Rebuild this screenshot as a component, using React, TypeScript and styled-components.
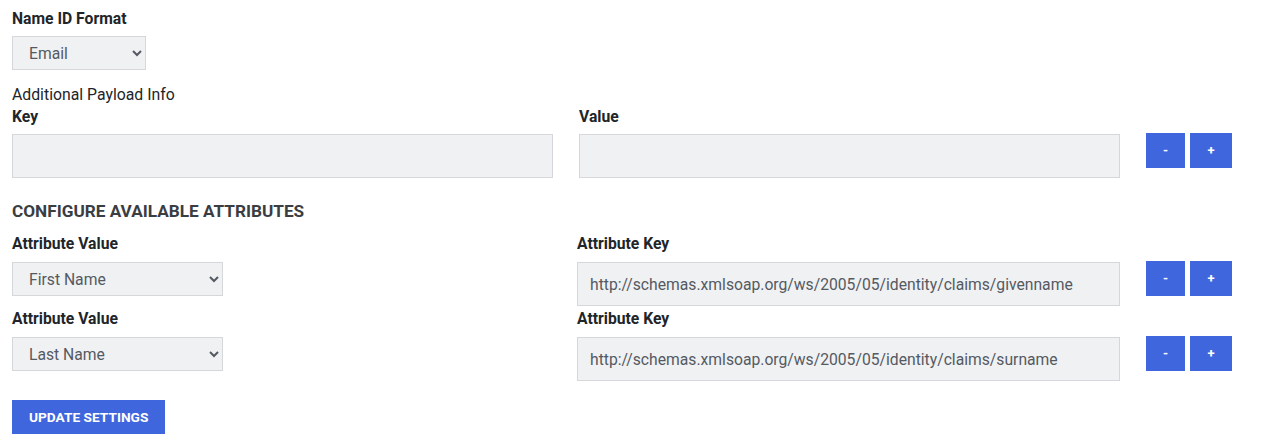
import React from "react";
import styled, { createGlobalStyle } from "styled-components";

const colors = {
  text: "#212529",
  muted: "#555a62",
  field: "#f0f1f3",
  border: "#d5d7db",
  blue: "#4066de",
};

const GlobalStyle = createGlobalStyle`
  body {
    margin: 0;
    background: #fff;
    font-family: Roboto, "Liberation Sans", Arial, sans-serif;
    color: ${colors.text};
  }
`;

interface IAttribute {
  label: string;
  key: string;
}

const attributes: IAttribute[] = [
  {
    label: "First Name",
    key: "http://schemas.xmlsoap.org/ws/2005/05/identity/claims/givenname",
  },
  {
    label: "Last Name",
    key: "http://schemas.xmlsoap.org/ws/2005/05/identity/claims/surname",
  },
];

const PairButtons = () => (
  <Buttons>
    <SquareButton $wide={false}>-</SquareButton>
    <SquareButton $wide>+</SquareButton>
  </Buttons>
);

export default function App() {
  return (
    <Page>
      <GlobalStyle />
      <Label>Name ID Format</Label>
      <Select $width={134} defaultValue="email">
        <option value="email">Email</option>
        <option value="persistent">Persistent</option>
      </Select>

      <Caption>Additional Payload Info</Caption>
      <PayloadRow>
        <Field>
          <Label>Key</Label>
          <TextInput />
        </Field>
        <Field>
          <Label>Value</Label>
          <TextInput />
        </Field>
        <PairButtons />
      </PayloadRow>

      <Heading>Configure Available Attributes</Heading>
      {attributes.map((attr) => (
        <AttributeRow key={attr.key}>
          <Field>
            <Label>Attribute Value</Label>
            <Select $width={211} defaultValue={attr.label}>
              <option>First Name</option>
              <option>Last Name</option>
              <option>Email</option>
            </Select>
          </Field>
          <Field>
            <Label>Attribute Key</Label>
            <TextInput defaultValue={attr.key} />
          </Field>
          <PairButtons />
        </AttributeRow>
      ))}

      <SubmitButton>Update Settings</SubmitButton>
    </Page>
  );
}

const Page = styled.div`
  padding: 8px 12px 14px 12px;
  width: 1256px;
  box-sizing: border-box;
`;

const Label = styled.label`
  display: block;
  font-size: 15.7px;
  font-weight: 700;
  line-height: 22px;
  margin-bottom: 6px;
`;

const Caption = styled.div`
  font-size: 15.8px;
  line-height: 22px;
  margin-top: 14px;
`;

const Select = styled.select<{ $width: number }>`
  display: block;
  width: ${(p) => p.$width}px;
  height: 34px;
  padding: 0 8px 0 12px;
  background: ${colors.field};
  border: 1px solid ${colors.border};
  border-radius: 0;
  color: ${colors.muted};
  font-family: Roboto, "Liberation Sans", Arial, sans-serif;
  font-size: 15.7px;
  outline: none;
`;

const TextInput = styled.input`
  display: block;
  width: 100%;
  height: 44px;
  box-sizing: border-box;
  padding: 0 12px;
  background: ${colors.field};
  border: 1px solid ${colors.border};
  border-radius: 0;
  color: ${colors.muted};
  font-family: Roboto, "Liberation Sans", Arial, sans-serif;
  font-size: 15.7px;
  outline: none;
`;

const Field = styled.div`
  display: flex;
  flex-direction: column;
  min-width: 0;
`;

const PayloadRow = styled.div`
  display: grid;
  grid-template-columns: 541px 541px auto;
  column-gap: 26px;
  align-items: end;

  & > ${Field} > ${Label} {
    margin-bottom: 6px;
  }
`;

const AttributeRow = styled.div`
  display: grid;
  grid-template-columns: 539px 543px auto;
  column-gap: 26px;
  align-items: start;
  margin-bottom: 2px;

  & > ${Field} > ${Label} {
    margin-bottom: 7px;
  }
`;

const Buttons = styled.div`
  display: flex;
  gap: 5px;
  align-self: end;
  margin-bottom: 10px;
`;

const SquareButton = styled.button<{ $wide: boolean }>`
  width: ${(p) => (p.$wide ? 42 : 39)}px;
  height: 35px;
  padding: 0;
  border: none;
  border-radius: 0;
  background: ${colors.blue};
  color: #fff;
  font-family: Roboto, "Liberation Sans", Arial, sans-serif;
  font-size: 13px;
  font-weight: 700;
  cursor: pointer;
`;

const Heading = styled.h2`
  margin: 22px 0 11px;
  font-size: 17.2px;
  line-height: 22px;
  font-weight: 700;
  text-transform: uppercase;
  color: #3a3d42;
`;

const SubmitButton = styled.button`
  display: block;
  margin-top: 19px;
  height: 34px;
  padding: 0 17px;
  border: none;
  border-radius: 0;
  background: ${colors.blue};
  color: #fff;
  font-family: Roboto, "Liberation Sans", Arial, sans-serif;
  font-size: 13.7px;
  font-weight: 700;
  text-transform: uppercase;
  cursor: pointer;
`;
